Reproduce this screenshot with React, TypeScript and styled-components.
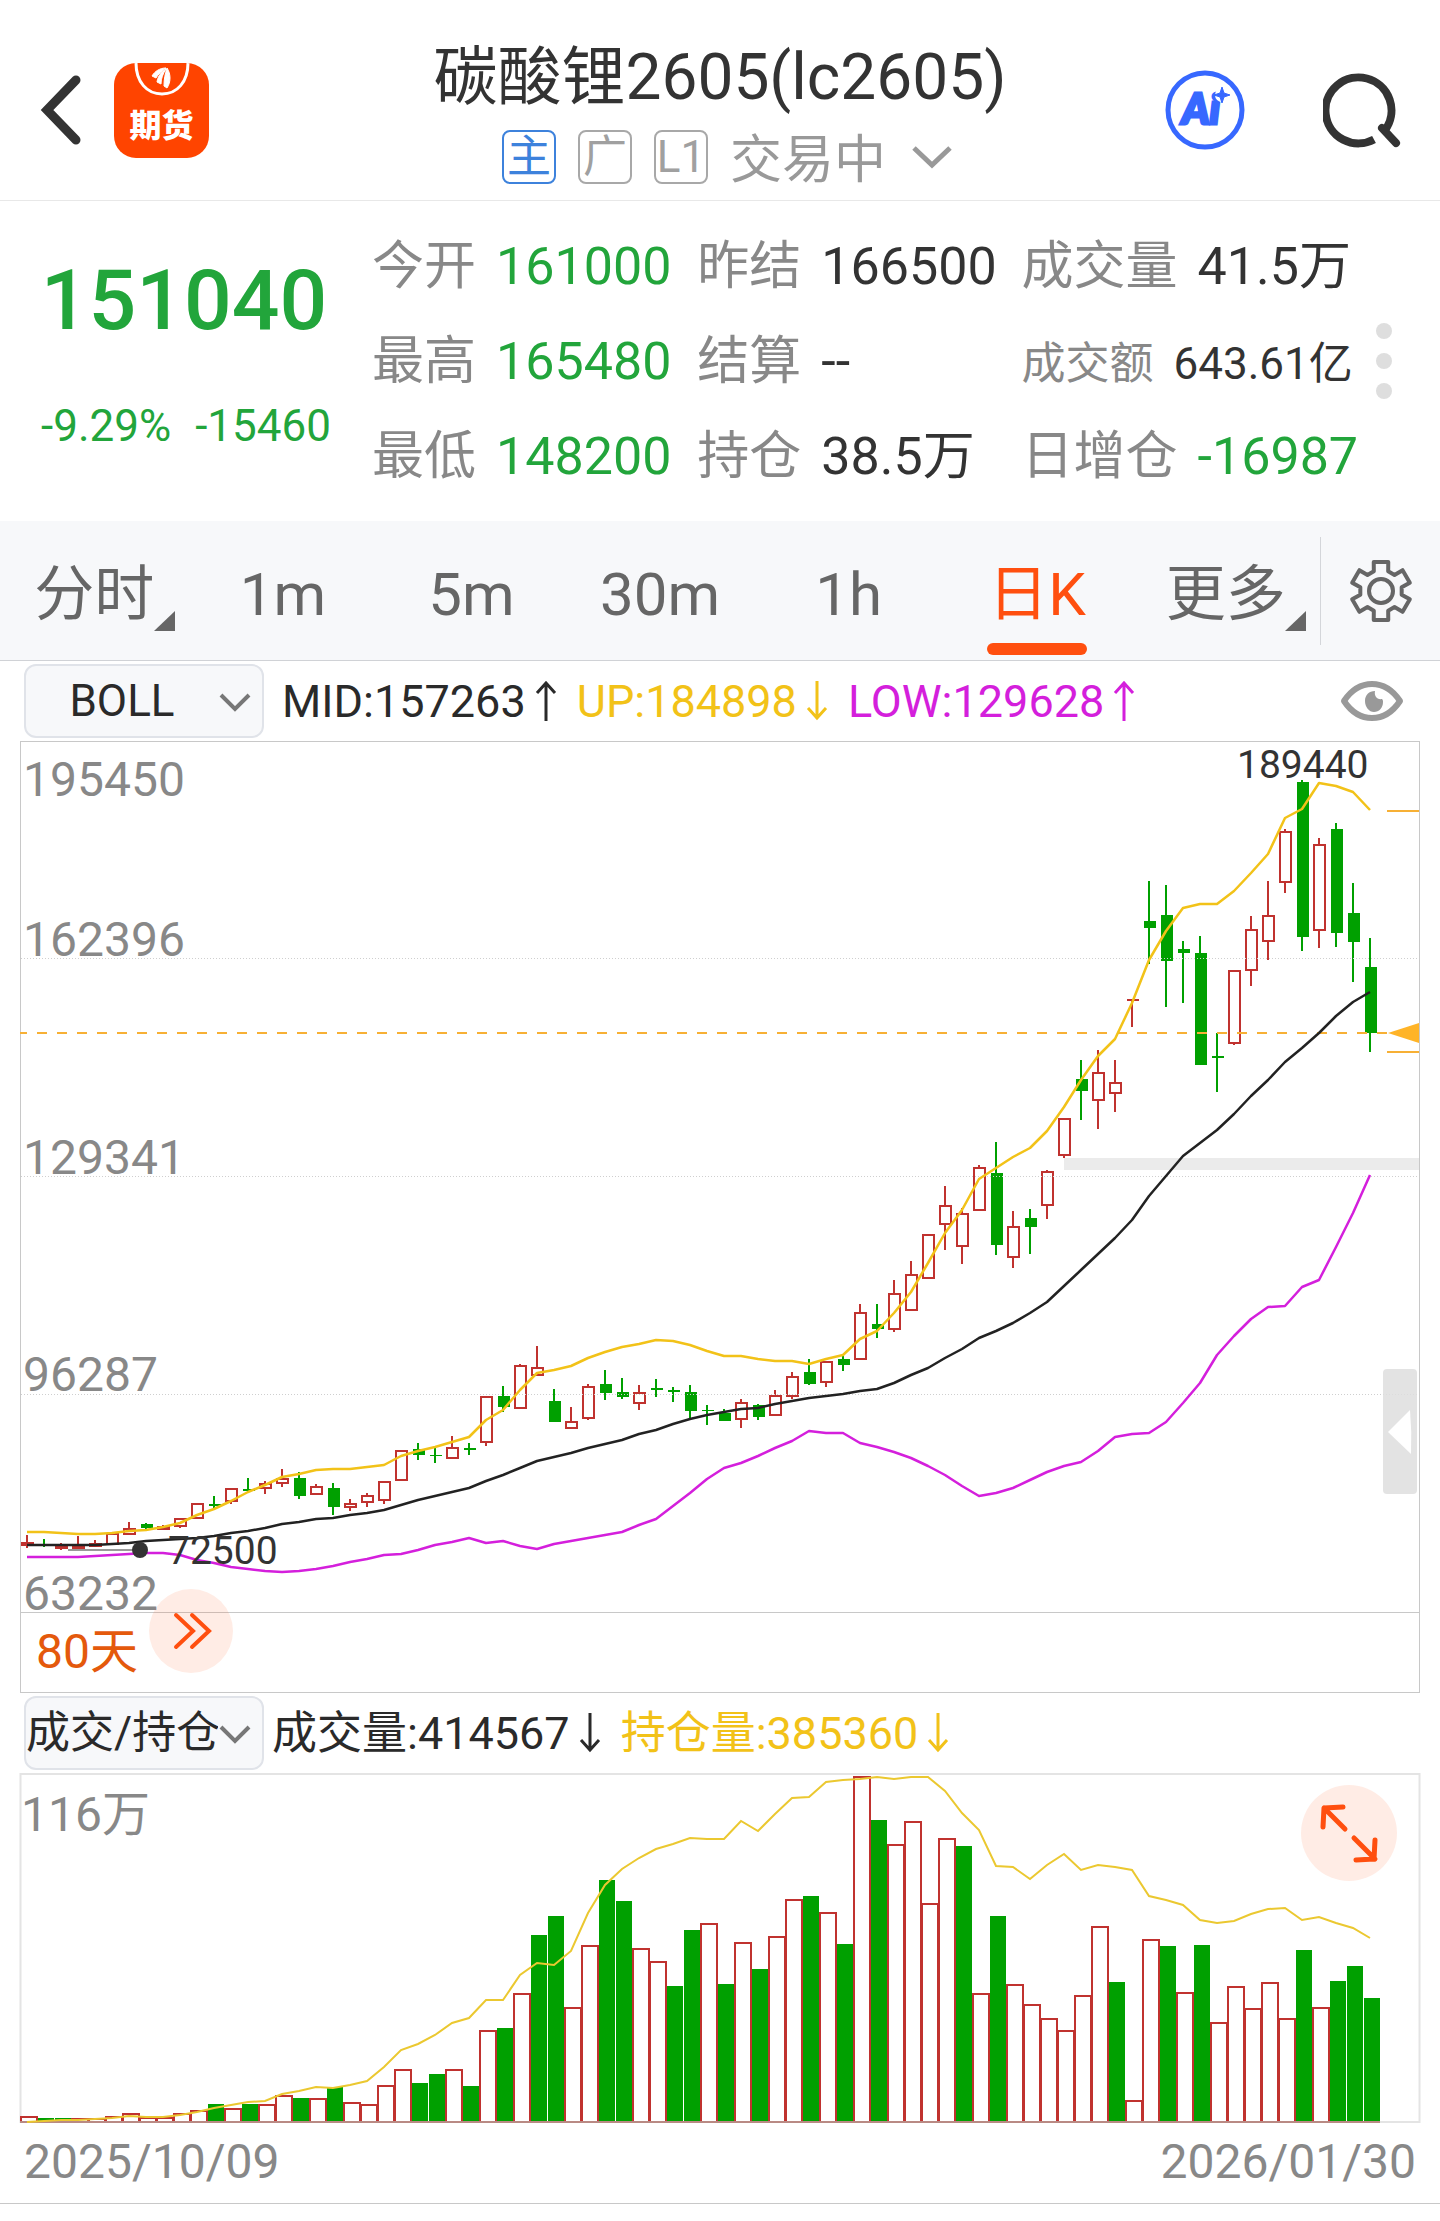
import React from "react";
import styled, { createGlobalStyle } from "styled-components";

const GREEN = "#22a53b";
const CANDLE_GREEN = "#00a000";
const CANDLE_RED = "#c0322f";
const ORANGE = "#ff4f0f";
const YELLOW = "#f2c218";
const MAGENTA = "#d41fdc";
const INK = "#2a2a2a";
const GREY = "#888888";

const FONT = `Roboto, "Noto Sans CJK SC", "Liberation Sans", sans-serif`;

const GlobalStyle = createGlobalStyle`
  * { box-sizing: border-box; }
  body { margin: 0; background: #ffffff; font-family: ${FONT}; color: #333333; }
  button, select { font-family: inherit; color: inherit; }
  button { border: 0; padding: 0; background: none; cursor: pointer; }
  svg { display: block; }
`;

/* ---------- header ---------- */

const Header = styled.header`
  display: grid;
  grid-template-columns: 1fr auto 1fr;
  height: 201px;
  border-bottom: 1px solid #e8e8e8;
`;

const HeaderSide = styled.div<{ $end?: boolean }>`
  display: flex;
  align-items: center;
  justify-content: ${(p) => (p.$end ? "flex-end" : "flex-start")};
  gap: ${(p) => (p.$end ? 78 : 32)}px;
  padding: ${(p) => (p.$end ? "20px 37px 0" : "20px 40px 0")};
`;

const IconButton = styled.button`
  display: block;
  flex: none;
`;

const AppLogo = styled.a`
  position: relative;
  display: flex;
  flex: none;
  align-items: flex-end;
  justify-content: center;
  width: 95px;
  height: 95px;
  padding-bottom: 12px;
  border-radius: 22px;
  overflow: hidden;
  background: #ff4400;
  color: #ffffff;
  font-size: 32px;
  font-weight: 900;
  line-height: 40px;
  text-decoration: none;
`;

const LogoMark = styled.svg`
  position: absolute;
  top: 0;
  left: 0;
`;

const TitleBlock = styled.div`
  display: flex;
  flex-direction: column;
  align-items: center;
  gap: 16px;
  padding-top: 42px;
`;

const Title = styled.h1`
  margin: 0;
  font-size: 64px;
  font-weight: 400;
  line-height: 72px;
`;

const StatusRow = styled.div`
  display: flex;
  align-items: flex-start;
  gap: 22px;
  height: 54px;
  padding-left: 14px;
`;

const Badge = styled.span<{ $active?: boolean }>`
  width: 54px;
  height: 54px;
  border: 2px solid ${(p) => (p.$active ? "#3d82dc" : "#a8a8a8")};
  border-radius: 8px;
  color: ${(p) => (p.$active ? "#3d82dc" : "#a0a0a0")};
  font-size: 44px;
  line-height: 50px;
  text-align: center;
`;

const StatusButton = styled.button`
  display: flex;
  align-items: center;
  gap: 26px;
  padding-top: 4px;
  color: #999999;
  font-size: 52px;
  line-height: 54px;
`;

/* ---------- quote ---------- */

const Quote = styled.section`
  display: flex;
  height: 320px;
`;

const PriceBlock = styled.div`
  flex: none;
  width: 372px;
  padding: 50px 4px 0 0;
  color: ${GREEN};
  text-align: center;
`;

const Price = styled.div`
  font-size: 84px;
  font-weight: 500;
  line-height: 100px;
`;

const Change = styled.div`
  display: flex;
  justify-content: center;
  gap: 24px;
  padding: 45px 0 0 4px;
  font-size: 44px;
  line-height: 60px;
`;

const Facts = styled.dl`
  display: grid;
  flex: 1;
  grid-template-columns: 324fr 323fr 353fr;
  grid-auto-rows: 95px;
  align-items: baseline;
  margin: 0;
  padding-top: 18px;
`;

const Fact = styled.div<{ $small?: boolean }>`
  display: flex;
  gap: 20px;
  font-size: ${(p) => (p.$small ? 44 : 52)}px;
  line-height: 95px;
  white-space: nowrap;
`;

const FactName = styled.dt`
  color: ${GREY};
`;

const FactValue = styled.dd<{ $down?: boolean }>`
  margin: 0;
  color: ${(p) => (p.$down ? GREEN : "#333333")};
`;

const MoreDots = styled.button`
  display: flex;
  flex: none;
  flex-direction: column;
  align-items: flex-start;
  justify-content: center;
  gap: 14px;
  width: 64px;
`;

const Dot = styled.span`
  width: 16px;
  height: 16px;
  border-radius: 50%;
  background: #dedede;
`;

/* ---------- period tabs ---------- */

const PeriodBar = styled.nav`
  display: flex;
  align-items: stretch;
  height: 140px;
  border-bottom: 1px solid #d0d2d6;
  background: #f7f8fa;
`;

const Tab = styled.button<{ $active?: boolean }>`
  position: relative;
  flex: 1 1 0;
  padding-top: 8px;
  color: ${(p) => (p.$active ? ORANGE : "#666666")};
  font-size: 60px;
  line-height: 72px;
  white-space: nowrap;
`;

const TabUnderline = styled.span`
  position: absolute;
  bottom: 5px;
  left: calc(50% - 50px);
  width: 100px;
  height: 12px;
  border-radius: 6px;
  background: ${ORANGE};
`;

const TabCorner = styled.svg`
  position: absolute;
  right: 14px;
  bottom: 29px;
`;

const SettingsCell = styled.div`
  display: flex;
  flex: none;
  align-items: center;
  justify-content: center;
  width: 120px;
  margin: 16px 0 15px;
  border-left: 1px solid #d4d6da;
`;

/* ---------- indicator rows ---------- */

const IndicatorRow = styled.div`
  display: flex;
  align-items: center;
  height: 80px;
  padding: 0 36px 0 24px;
`;

const SelectBox = styled.label`
  position: relative;
  flex: none;
  width: 240px;
`;

const Select = styled.select`
  width: 100%;
  height: 74px;
  padding: 0 44px 0 0;
  border: 2px solid #e0e3e9;
  border-radius: 12px;
  background: #f7f8fa;
  color: ${INK};
  appearance: none;
  font-size: 44px;
  text-align-last: center;
`;

const SelectChevron = styled.svg`
  position: absolute;
  top: 28px;
  right: 13px;
  pointer-events: none;
`;

const Readouts = styled.div<{ $wide?: boolean }>`
  display: flex;
  flex: 1;
  gap: 20px;
  padding-left: ${(p) => (p.$wide ? 18 : 8)}px;
`;

const Readout = styled.span<{ $color: string }>`
  display: flex;
  align-items: center;
  gap: 9px;
  padding-top: 2px;
  color: ${(p) => p.$color};
  font-size: 45px;
  line-height: 60px;
  white-space: nowrap;
`;

/* ---------- charts ---------- */

const ChartWrap = styled.section`
  position: relative;
`;

const Chart = styled.svg`
  width: 100%;
  height: auto;
`;

const AxisText = styled.text`
  fill: ${GREY};
  font-family: ${FONT};
  font-size: 48px;
`;

const MarkText = styled.text`
  fill: #333333;
  font-family: ${FONT};
  font-size: 39px;
`;

const SpanText = styled(AxisText)`
  fill: #e4590c;
`;

const RoundButton = styled.button<{ $size: number }>`
  position: absolute;
  display: flex;
  align-items: center;
  justify-content: center;
  width: ${(p) => p.$size}px;
  height: ${(p) => p.$size}px;
  border-radius: 50%;
  background: rgba(255, 79, 15, 0.11);
`;

const ForwardButton = styled(RoundButton)`
  bottom: 20px;
  left: 149px;
`;

const ExpandButton = styled(RoundButton)`
  top: 12px;
  right: 43px;
`;

const DrawerHandle = styled.button`
  position: absolute;
  right: 23px;
  bottom: 199px;
  display: flex;
  align-items: center;
  justify-content: center;
  width: 34px;
  height: 125px;
  border-radius: 4px;
  background: rgba(222, 222, 222, 0.85);
`;

const DateRow = styled.div`
  display: flex;
  justify-content: space-between;
  padding: 0 24px 3px;
  border-bottom: 1px solid #c8c8c8;
  color: ${GREY};
  font-size: 48px;
  line-height: 76px;
`;

/* ---------- data ---------- */

type Candle = ["r" | "g", number, number, number, number];

/* direction, high, body top, body bottom, low (vertical chart units) */
const candles: Candle[] = [
  ["r", 1535, 1543, 1545, 1548], ["g", 1539, 1544, 1546, 1547], ["r", 1543, 1547, 1548, 1550],
  ["r", 1536, 1547, 1548, 1549], ["r", 1540, 1544, 1546, 1547], ["r", 1534, 1534, 1544, 1544],
  ["r", 1522, 1529, 1534, 1535], ["g", 1523, 1524, 1528, 1530], ["r", 1525, 1527, 1529, 1530],
  ["r", 1518, 1519, 1526, 1528], ["r", 1504, 1504, 1518, 1518], ["g", 1496, 1504, 1506, 1509],
  ["r", 1489, 1489, 1501, 1504], ["g", 1478, 1489, 1491, 1493], ["r", 1481, 1484, 1488, 1494],
  ["r", 1469, 1479, 1483, 1487], ["g", 1472, 1478, 1496, 1499], ["r", 1484, 1487, 1494, 1495],
  ["g", 1483, 1488, 1507, 1515], ["r", 1499, 1504, 1507, 1511], ["r", 1493, 1496, 1502, 1507],
  ["r", 1482, 1482, 1500, 1504], ["r", 1451, 1451, 1480, 1480], ["g", 1443, 1449, 1455, 1460],
  ["g", 1447, 1455, 1456, 1463], ["r", 1436, 1448, 1458, 1458], ["g", 1443, 1448, 1450, 1455],
  ["r", 1397, 1397, 1442, 1446], ["g", 1386, 1396, 1407, 1412], ["r", 1364, 1366, 1408, 1408],
  ["r", 1346, 1368, 1375, 1375], ["g", 1389, 1401, 1422, 1422], ["r", 1407, 1422, 1428, 1428],
  ["r", 1384, 1387, 1418, 1420], ["g", 1370, 1384, 1393, 1400], ["g", 1378, 1392, 1397, 1399],
  ["r", 1385, 1393, 1403, 1410], ["g", 1379, 1388, 1390, 1397], ["g", 1387, 1390, 1392, 1402],
  ["g", 1385, 1392, 1411, 1419], ["g", 1405, 1410, 1411, 1425], ["g", 1409, 1413, 1421, 1421],
  ["r", 1399, 1403, 1419, 1428], ["g", 1404, 1405, 1417, 1420], ["r", 1390, 1396, 1415, 1415],
  ["r", 1372, 1377, 1396, 1399], ["g", 1359, 1372, 1384, 1385], ["r", 1362, 1362, 1382, 1387],
  ["g", 1355, 1359, 1365, 1371], ["r", 1304, 1313, 1359, 1359], ["g", 1304, 1324, 1329, 1338],
  ["r", 1280, 1294, 1329, 1332], ["r", 1261, 1275, 1310, 1310], ["r", 1235, 1235, 1278, 1278],
  ["r", 1186, 1206, 1224, 1250], ["r", 1208, 1214, 1246, 1264], ["r", 1165, 1168, 1210, 1210],
  ["g", 1142, 1173, 1245, 1255], ["r", 1211, 1227, 1257, 1268], ["g", 1209, 1218, 1227, 1254],
  ["r", 1170, 1172, 1205, 1219], ["r", 1119, 1119, 1155, 1158], ["g", 1060, 1079, 1091, 1120],
  ["r", 1050, 1073, 1100, 1129], ["r", 1060, 1083, 1093, 1112], ["r", 1000, 1000, 1000, 1027],
  ["g", 881, 921, 928, 964], ["g", 885, 915, 961, 1007], ["g", 941, 949, 953, 1003],
  ["g", 936, 953, 1065, 1065], ["g", 1033, 1056, 1058, 1092], ["r", 971, 971, 1043, 1045],
  ["r", 916, 930, 970, 986], ["r", 881, 916, 941, 960], ["r", 829, 832, 882, 893],
  ["g", 780, 782, 937, 951], ["r", 838, 845, 930, 948], ["g", 823, 829, 933, 947],
  ["g", 883, 913, 942, 982], ["g", 938, 967, 1033, 1052],
];

const upper = [
  1532, 1532, 1533, 1534, 1534, 1533, 1531, 1530, 1527, 1523, 1515, 1509, 1501, 1492, 1485, 1477,
  1474, 1470, 1469, 1469, 1467, 1465, 1456, 1451, 1447, 1442, 1437, 1420, 1410, 1390, 1373, 1370,
  1366, 1358, 1352, 1347, 1344, 1340, 1341, 1345, 1351, 1356, 1356, 1359, 1361, 1361, 1364, 1359,
  1355, 1339, 1331, 1313, 1292, 1263, 1233, 1210, 1179, 1168, 1157, 1148, 1131, 1107, 1080, 1056,
  1039, 1003, 960, 931, 908, 904, 904, 891, 873, 854, 818, 809, 783, 786, 792, 810,
];

const middle = [
  1545, 1545, 1545, 1545, 1545, 1544, 1543, 1541, 1540, 1539, 1538, 1536, 1533, 1531, 1528, 1524,
  1522, 1519, 1518, 1515, 1513, 1510, 1505, 1500, 1496, 1492, 1488, 1481, 1475, 1468, 1461, 1457,
  1453, 1448, 1444, 1440, 1434, 1430, 1424, 1419, 1415, 1412, 1409, 1408, 1404, 1401, 1398, 1396,
  1394, 1391, 1389, 1383, 1375, 1368, 1358, 1349, 1338, 1331, 1323, 1313, 1302, 1286, 1270, 1254,
  1238, 1220, 1196, 1176, 1156, 1143, 1130, 1114, 1096, 1080, 1062, 1048, 1033, 1016, 1002, 992,
];

const lower = [
  1557, 1557, 1557, 1557, 1556, 1555, 1554, 1553, 1553, 1555, 1560, 1563, 1567, 1569, 1571, 1572,
  1571, 1569, 1566, 1562, 1559, 1555, 1554, 1550, 1545, 1542, 1538, 1543, 1541, 1546, 1549, 1544,
  1541, 1538, 1535, 1532, 1525, 1519, 1506, 1493, 1479, 1468, 1463, 1456, 1448, 1441, 1431, 1433,
  1433, 1443, 1447, 1452, 1458, 1466, 1475, 1486, 1496, 1493, 1488, 1480, 1472, 1466, 1462, 1451,
  1437, 1434, 1433, 1422, 1403, 1383, 1355, 1336, 1319, 1307, 1306, 1287, 1280, 1247, 1213, 1175,
];

const volumeTops = [
  2117, 2118, 2118, 2119, 2119, 2117, 2114, 2118, 2118, 2114, 2111, 2104, 2109, 2104, 2105, 2096,
  2098, 2099, 2087, 2103, 2105, 2086, 2070, 2083, 2074, 2070, 2086, 2031, 2028, 1994, 1935, 1916,
  2008, 1946, 1880, 1901, 1949, 1962, 1986, 1930, 1924, 1984, 1943, 1969, 1937, 1900, 1896, 1913,
  1944, 1777, 1820, 1845, 1822, 1904, 1839, 1846, 1994, 1916, 1985, 2005, 2019, 2031, 1996, 1927,
  1982, 2101, 1940, 1946, 1993, 1945, 2023, 1987, 2009, 1983, 2019, 1950, 2008, 1981, 1966, 1998,
];

const volumeDown = new Set([
  1, 2, 11, 13, 16, 18, 23, 24, 26, 28, 30, 31, 34, 35, 38, 39, 41, 43, 46, 48, 50, 55, 57, 64, 67,
  69, 75, 77, 78, 79,
]);

const openInterest = [
  2122, 2121, 2120, 2120, 2119, 2118, 2116, 2117, 2117, 2115, 2112, 2108, 2105, 2102, 2101, 2094,
  2091, 2087, 2088, 2085, 2081, 2067, 2050, 2044, 2035, 2023, 2018, 2000, 2000, 1975, 1963, 1965,
  1951, 1913, 1885, 1869, 1858, 1849, 1844, 1838, 1839, 1839, 1821, 1831, 1814, 1798, 1797, 1782,
  1780, 1779, 1777, 1779, 1777, 1777, 1791, 1813, 1830, 1866, 1867, 1879, 1865, 1854, 1870, 1865,
  1867, 1870, 1896, 1900, 1905, 1920, 1923, 1921, 1914, 1909, 1908, 1920, 1917, 1923, 1928, 1938,
];

const xAt = (i: number) => 27 + 17 * i;
const toPoints = (ys: number[]) => ys.map((y, i) => `${xAt(i)},${y}`).join(" ");

/* ---------- drawings ---------- */

const gearPoints = Array.from({ length: 6 }, (_, k) => {
  const mid = -90 + 60 * k;
  return [
    [21, mid - 20],
    [30, mid - 14],
    [30, mid + 14],
    [21, mid + 20],
  ]
    .map(([r, deg]) => {
      const a = (deg * Math.PI) / 180;
      return `${(32 + r * Math.cos(a)).toFixed(2)},${(32 + r * Math.sin(a)).toFixed(2)}`;
    })
    .join(" ");
}).join(" ");

const Gear = () => (
  <svg width="64" height="64" viewBox="0 0 64 64" fill="none" stroke="#666666" strokeWidth="4" strokeLinejoin="round">
    <polygon points={gearPoints} />
    <circle cx="32" cy="32" r="12" />
  </svg>
);

const Eye = () => (
  <svg width="64" height="42" viewBox="0 0 64 42">
    <path d="M4 21C12 9 21 4 32 4s20 5 28 17c-8 12-17 17-28 17S12 33 4 21Z" fill="none" stroke="#999999" strokeWidth="6" strokeLinejoin="round" />
    <path d="M35 11c-6 0-10 4-10 10s4 11 9 11 9-4 9-10c0-1 0-2-1-3-5 1-8-3-7-8Z" fill="#999999" />
  </svg>
);

const TrendArrow = ({ down }: { down?: boolean }) => (
  <svg width="22" height="42" viewBox="0 0 22 42" fill="none" stroke="currentColor" strokeWidth="3">
    <path d={down ? "M11 0v37M2 27l9 10 9-10" : "M11 40V2M2 12l9-10 9 10"} />
  </svg>
);

const Corner = () => (
  <TabCorner width="21" height="20" viewBox="0 0 21 20">
    <path d="M21 0v20H0Z" fill="#666666" />
  </TabCorner>
);

const IndicatorSelect = ({ name }: { name: string }) => (
  <SelectBox>
    <Select aria-label={name} defaultValue={name}>
      <option>{name}</option>
    </Select>
    <SelectChevron width="32" height="20" viewBox="0 0 32 20" fill="none" stroke="#777777" strokeWidth="4">
      <path d="M2 3l14 14L30 3" />
    </SelectChevron>
  </SelectBox>
);

const facts = [
  { name: "今开", value: "161000", down: true },
  { name: "昨结", value: "166500" },
  { name: "成交量", value: "41.5万" },
  { name: "最高", value: "165480", down: true },
  { name: "结算", value: "--" },
  { name: "成交额", value: "643.61亿", small: true },
  { name: "最低", value: "148200", down: true },
  { name: "持仓", value: "38.5万" },
  { name: "日增仓", value: "-16987", down: true },
];

const tabs = [
  { name: "分时", menu: true },
  { name: "1m" },
  { name: "5m" },
  { name: "30m" },
  { name: "1h" },
  { name: "日K", active: true },
  { name: "更多", menu: true },
];

const PriceChart = () => (
  <Chart viewBox="0 741 1440 952" role="img" aria-label="日K">
    <g stroke="#c8c8c8" fill="none">
      <rect x="20.5" y="741.5" width="1399" height="951" />
      <path d="M20 1612.5H1420" />
    </g>
    <rect x="1064" y="1158" width="355" height="12" fill="#ebebeb" />
    <AxisText x="23" y="796">195450</AxisText>
    <AxisText x="23" y="956">162396</AxisText>
    <AxisText x="23" y="1174">129341</AxisText>
    <AxisText x="23" y="1391">96287</AxisText>
    <AxisText x="23" y="1610">63232</AxisText>
    {candles.map(([dir, high, top, bottom, low], i) => {
      const x = xAt(i);
      return dir === "g" ? (
        <g key={i} fill={CANDLE_GREEN}>
          <rect x={x - 1} y={high} width="2" height={low - high} />
          <rect x={x - 5} y={top} width="12" height={bottom - top} />
        </g>
      ) : (
        <g key={i} stroke={CANDLE_RED} strokeWidth="2" fill="none">
          <path d={`M${x} ${high}V${top}M${x} ${bottom}V${low}`} />
          {top === bottom ? (
            <path d={`M${x - 5} ${top}h12`} />
          ) : (
            <rect x={x - 5} y={top} width="11" height={bottom - top} />
          )}
        </g>
      );
    })}
    <g stroke="#cfcfcf" strokeDasharray="1 2">
      <path d="M21 958.5H1419M21 1176.5H1419M21 1394.5H1419" />
    </g>
    <path d="M20 1033H1388" stroke="#f7b035" strokeWidth="2" strokeDasharray="10 10" strokeDashoffset="3" />
    <path d="M1388 1033L1419 1023V1043Z" fill="#ffb428" />
    <path d="M1387 811H1419M1387 1052H1419" stroke="#f7b035" strokeWidth="2" />
    <g fill="none" strokeWidth="2.5" strokeLinejoin="round">
      <polyline points={toPoints(lower)} stroke={MAGENTA} />
      <polyline points={toPoints(middle)} stroke="#222222" />
      <polyline points={toPoints(upper)} stroke={YELLOW} />
    </g>
    <path d="M68 1550H140" stroke="#999999" strokeWidth="2" />
    <circle cx="140" cy="1550" r="8" fill="#333333" />
    <MarkText x="168" y="1564">72500</MarkText>
    <MarkText x="1237" y="778">189440</MarkText>
    <SpanText x="36" y="1668">80天</SpanText>
  </Chart>
);

const VolumeChart = () => (
  <Chart viewBox="0 1773 1440 351" role="img" aria-label="成交/持仓">
    <rect x="20.5" y="1774" width="1399" height="348" stroke="#e4e4e4" strokeWidth="2" fill="none" />
    <AxisText x="21" y="1831">116万</AxisText>
    {volumeTops.map((top, i) => {
      const x = 20 + 17 * i;
      return volumeDown.has(i) ? (
        <rect key={i} x={x + 1} y={top} width="16" height={2123 - top} fill={CANDLE_GREEN} />
      ) : (
        <rect key={i} x={x + 1} y={top} width="16" height={2122 - top} fill="#ffffff" stroke={CANDLE_RED} strokeWidth="2" />
      );
    })}
    <path d="M20 2122H1380" stroke="#b98a84" strokeWidth="2" />
    <polyline points={toPoints(openInterest)} fill="none" stroke="#ebc830" strokeWidth="2" />
  </Chart>
);

export default function App() {
  return (
    <>
      <GlobalStyle />
      <Header>
        <HeaderSide>
          <IconButton aria-label="返回">
            <svg width="42" height="70" viewBox="0 0 42 70" fill="none" stroke="#333333" strokeWidth="9" strokeLinecap="round" strokeLinejoin="miter">
              <path d="M36 5L7 35l29 30" />
            </svg>
          </IconButton>
          <AppLogo href="#">
            <LogoMark width="95" height="95" viewBox="0 0 95 95" fill="none">
              <path d="M22 0C22 19 33 31 48 31S74 19 74 0" stroke="#ffffff" strokeWidth="3" />
              <path
                d="M52 5C46 5 41 8 38 13L42 15C44 11 48 8 52 5ZM52 6C47 9 44 13 43 19L47 21C47 15 49 11 52 6ZM53 5C51 11 50 16 50 23L53 25C57 19 57 11 53 5Z"
                fill="#ffffff"
                stroke="#ffffff"
                strokeWidth="1"
              />
            </LogoMark>
            期货
          </AppLogo>
        </HeaderSide>
        <TitleBlock>
          <Title>碳酸锂2605(lc2605)</Title>
          <StatusRow>
            <Badge $active>主</Badge>
            <Badge>广</Badge>
            <Badge>L1</Badge>
            <StatusButton>
              交易中
              <svg width="40" height="32" viewBox="0 0 40 32" fill="none" stroke="#999999" strokeWidth="5">
                <path d="M2 3l18 17L38 3" />
              </svg>
            </StatusButton>
          </StatusRow>
        </TitleBlock>
        <HeaderSide $end>
          <IconButton aria-label="AI">
            <svg width="80" height="80" viewBox="0 0 80 80">
              <circle cx="40" cy="40" r="37" fill="none" stroke="#3768ff" strokeWidth="5" />
              <text
                x="17"
                y="54"
                fill="#3768ff"
                stroke="#3768ff"
                strokeWidth="3"
                fontFamily="Lato, sans-serif"
                fontSize="42"
                fontWeight="900"
                fontStyle="italic"
              >
                Ai
              </text>
              <circle cx="57" cy="25" r="7" fill="#ffffff" />
              <path d="M57 17l2 6 6 2-6 2-2 6-2-6-6-2 6-2Z" fill="#3768ff" stroke="#3768ff" strokeWidth="1" />
            </svg>
          </IconButton>
          <IconButton aria-label="搜索">
            <svg width="80" height="76" viewBox="0 0 80 76" fill="none" stroke="#333333" strokeWidth="8">
              <path d="M51 67.500A33 33 0 1 1 62 58" />
              <path d="M59 56l14 15" strokeLinecap="round" />
            </svg>
          </IconButton>
        </HeaderSide>
      </Header>

      <Quote>
        <PriceBlock>
          <Price>151040</Price>
          <Change>
            <span>-9.29%</span>
            <span>-15460</span>
          </Change>
        </PriceBlock>
        <Facts>
          {facts.map((f) => (
            <Fact key={f.name} $small={f.small}>
              <FactName>{f.name}</FactName>
              <FactValue $down={f.down}>{f.value}</FactValue>
            </Fact>
          ))}
        </Facts>
        <MoreDots aria-label="更多">
          <Dot />
          <Dot />
          <Dot />
        </MoreDots>
      </Quote>

      <PeriodBar>
        {tabs.map((t) => (
          <Tab key={t.name} $active={t.active}>
            {t.name}
            {t.menu && <Corner />}
            {t.active && <TabUnderline />}
          </Tab>
        ))}
        <SettingsCell>
          <IconButton aria-label="设置">
            <Gear />
          </IconButton>
        </SettingsCell>
      </PeriodBar>

      <IndicatorRow>
        <IndicatorSelect name="BOLL" />
        <Readouts $wide>
          <Readout $color={INK}>
            MID:157263
            <TrendArrow />
          </Readout>
          <Readout $color={YELLOW}>
            UP:184898
            <TrendArrow down />
          </Readout>
          <Readout $color={MAGENTA}>
            LOW:129628
            <TrendArrow />
          </Readout>
        </Readouts>
        <IconButton aria-label="显示">
          <Eye />
        </IconButton>
      </IndicatorRow>

      <ChartWrap>
        <PriceChart />
        <ForwardButton $size={84} aria-label="快进">
          <svg width="42" height="42" viewBox="0 0 42 42" fill="none" stroke={ORANGE} strokeWidth="4" strokeLinecap="round">
            <path d="M6 5l17 16L6 37M22 5l17 16L22 37" />
          </svg>
        </ForwardButton>
        <DrawerHandle aria-label="展开">
          <svg width="24" height="44" viewBox="0 0 24 44" fill="#ffffff">
            <path d="M0 22L22 0q2 22 1 44Z" />
          </svg>
        </DrawerHandle>
      </ChartWrap>

      <IndicatorRow>
        <IndicatorSelect name="成交/持仓" />
        <Readouts>
          <Readout $color={INK}>
            成交量:414567
            <TrendArrow down />
          </Readout>
          <Readout $color={YELLOW}>
            持仓量:385360
            <TrendArrow down />
          </Readout>
        </Readouts>
      </IndicatorRow>

      <ChartWrap>
        <VolumeChart />
        <ExpandButton $size={96} aria-label="全屏">
          <svg width="64" height="64" viewBox="0 0 64 64" fill="none" stroke={ORANGE} strokeWidth="5" strokeLinecap="round" strokeLinejoin="round">
            <path d="M28 28L7 7M6 26L7 7l19-1" />
            <path d="M37 37l21 21M58 39l-1 19-18 1" />
          </svg>
        </ExpandButton>
      </ChartWrap>

      <DateRow>
        <time>2025/10/09</time>
        <time>2026/01/30</time>
      </DateRow>
    </>
  );
}
